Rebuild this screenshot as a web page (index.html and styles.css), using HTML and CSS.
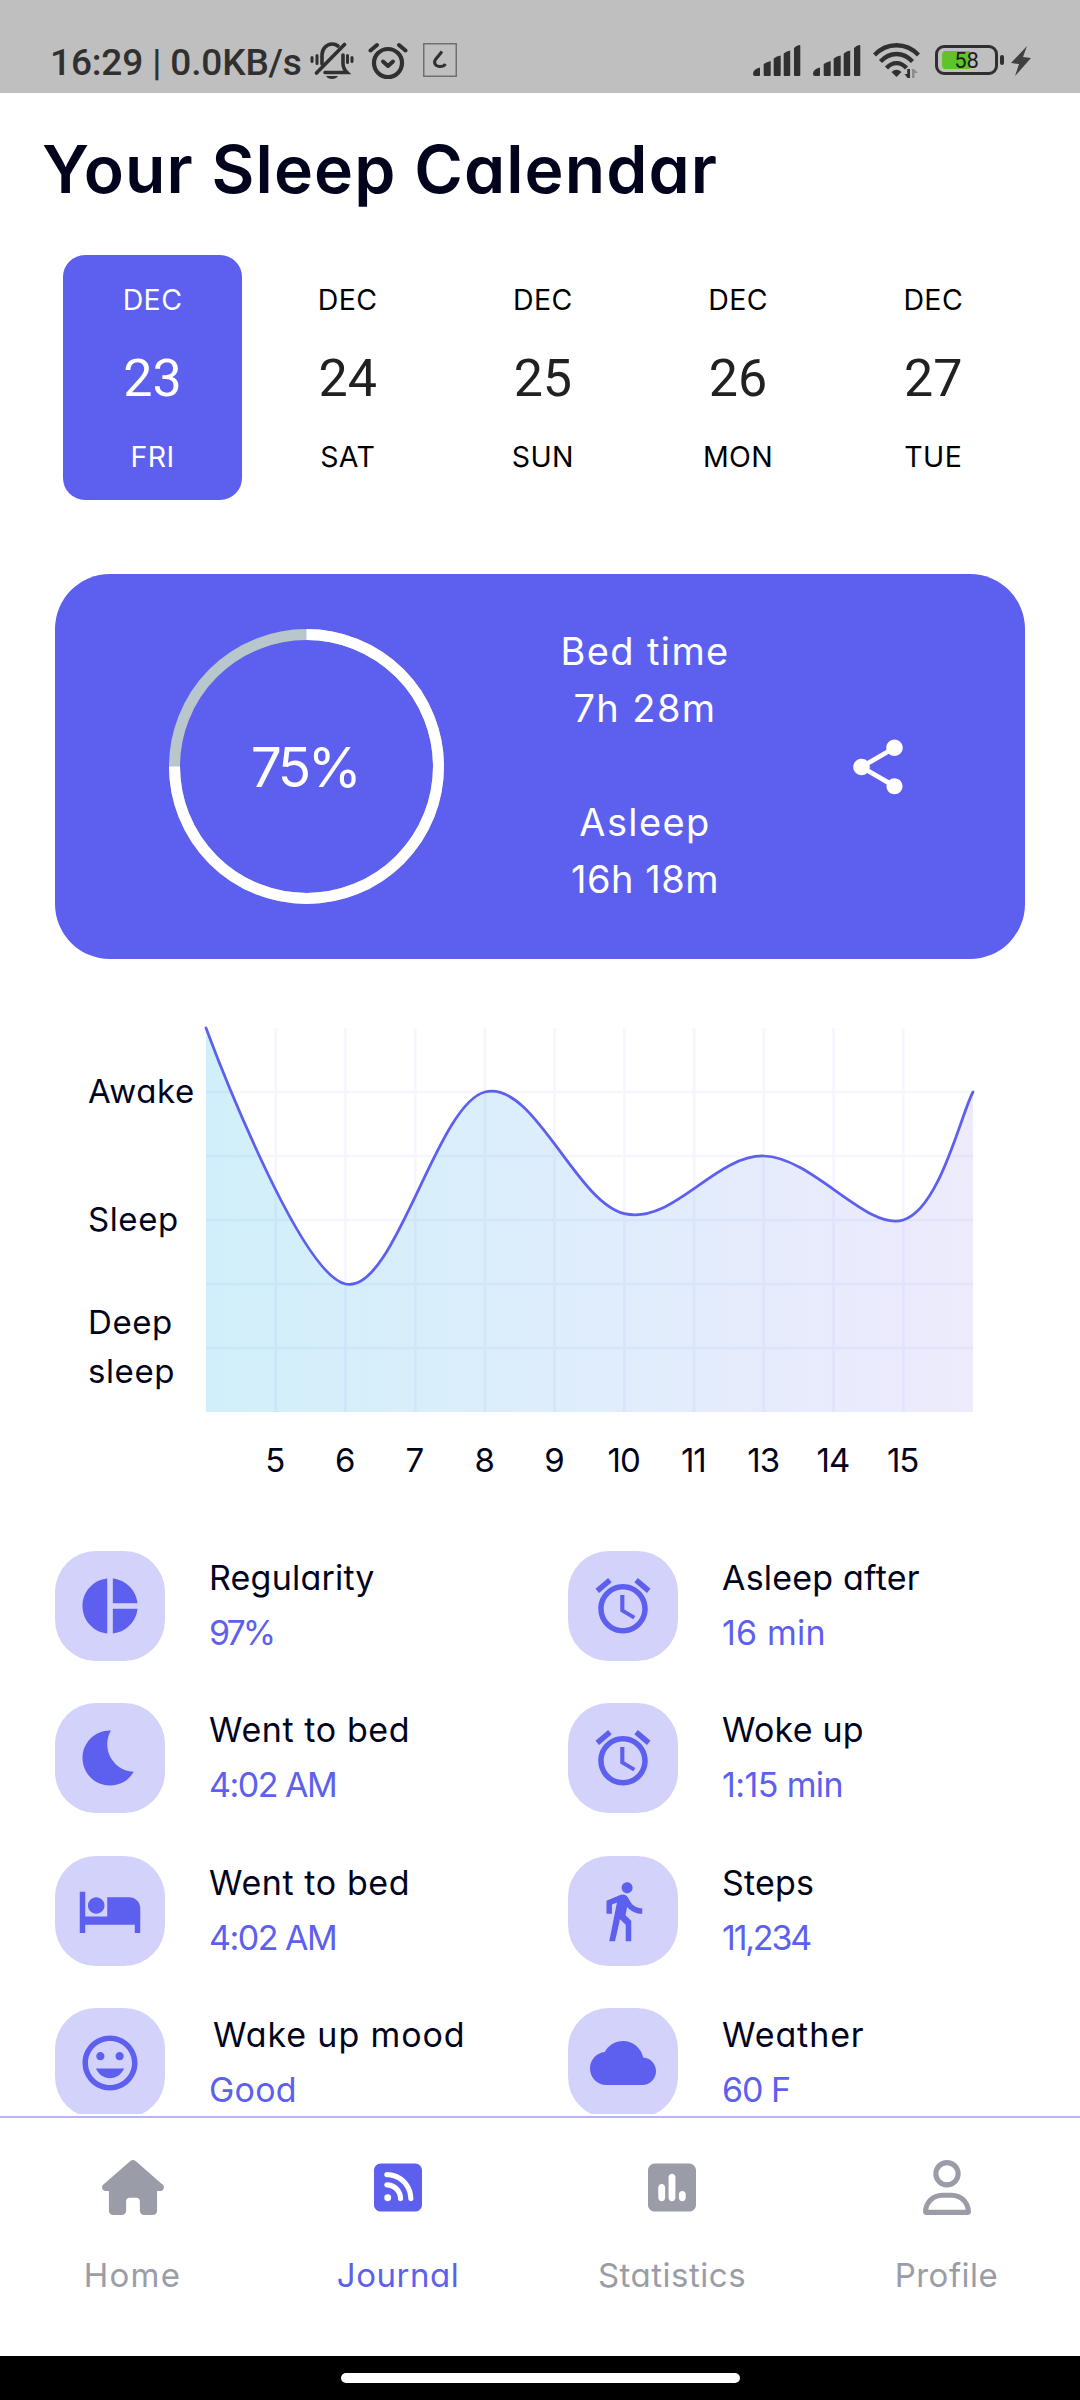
FILE: index.html
```html
<!DOCTYPE html>
<html lang="en">
<head>
<meta charset="utf-8">
<title>Your Sleep Calendar</title>
<link rel="stylesheet" href="styles.css">
</head>
<body>
<div class="screen">
  <header class="status">
    <div class="status-left">
      <span class="clock">16:29 | 0.0KB/s</span>
      <svg class="i-bell" width="44" height="38" viewBox="0 0 44 38" fill="none" stroke="#303030" stroke-width="3.6" stroke-linecap="round">
        <path d="M6.5 31 34.5 2.5"/>
        <path d="M12 22V13c0-6 4.500-11 10-11 2.500 0 4.500.8 6 2" />
        <path d="M15 30.500H37c-3-3-4-5-4-9V13"/>
        <path d="M2 15.500v4M7 13.500v8M42 15.500v4M37.500 13.500v7" stroke-width="3"/>
        <path d="M16 34h12c-2 4-10 4-12 0z" fill="#303030" stroke="none"/>
      </svg>
      <svg class="i-alarm" width="40" height="38" viewBox="0 0 40 38" fill="none" stroke="#303030" stroke-width="4.200" stroke-linecap="round" stroke-linejoin="round">
        <circle cx="20" cy="21" r="14"/>
        <path d="M2.500 8.500 9 3M37.500 8.500 31 3" stroke-width="4"/>
        <path d="M15 19.500l5 4.500 5-4.500" stroke-width="4"/>
      </svg>
      <svg class="i-box" width="34" height="34" viewBox="0 0 34 34" fill="none" stroke="#303030">
        <rect x=".75" y=".75" width="32.500" height="32.500" stroke="#707070" stroke-width="1.500"/>
        <path d="M19 8.500l-6.500 8c-2 3-.5 7 4.500 7 2.500 0 4.500-1 5.500-2.500" stroke-width="3"/>
      </svg>
    </div>
    <div class="status-right">
      <svg class="i-signal" width="48" height="31" viewBox="0 0 48 31" fill="#303030"><path d="M0 29q0-5 7-6.500v7.500q0 1-1 1H2q-2 0-2-2zM10.700 19q3-2 7-3v14q0 1-1 1h-5q-1 0-1-1zM20.700 13.500q3-2.500 7-3V30q0 1-1 1h-5q-1 0-1-1zM30.700 8.500q3-2.500 6.500-3V30q0 1-1 1h-4.500q-1 0-1-1zM41 3q2.500-2.500 5.300-3 1 0 1 1v29q0 1-1 1H42q-1 0-1-1z"/></svg>
      <svg class="i-signal" width="48" height="31" viewBox="0 0 48 31" fill="#303030"><path d="M0 29q0-5 7-6.500v7.500q0 1-1 1H2q-2 0-2-2zM10.700 19q3-2 7-3v14q0 1-1 1h-5q-1 0-1-1zM20.700 13.500q3-2.500 7-3V30q0 1-1 1h-5q-1 0-1-1zM30.700 8.500q3-2.500 6.500-3V30q0 1-1 1h-4.500q-1 0-1-1zM41 3q2.500-2.500 5.300-3 1 0 1 1v29q0 1-1 1H42q-1 0-1-1z"/></svg>
      <svg class="i-wifi" width="47" height="36" viewBox="0 0 47 36" fill="none" stroke="#303030" stroke-width="4.300">
        <path d="M1.500 12C14-1 33-1 45.500 12M7.500 18.500C17 8.500 30 8.500 39.500 18.500M13.500 25c6-6.500 14-6.500 20 0"/>
        <path d="M23.500 34l-5-5q5-4.500 10 0z" fill="#303030" stroke="none"/>
        <path d="M37 26v9h-2.500L31.500 31h2.700v-5z" fill="#303030" stroke="none"/>
        <path d="M39 35v-9h2l4 4h-3.500v5z" fill="#8c8c8c" stroke="none"/>
      </svg>
      <div class="battery"><span class="battery-fill"></span><span class="battery-text">58</span></div>
      <span class="battery-nub"></span>
      <svg class="i-bolt" width="20" height="30" viewBox="0 0 20 30" fill="#404040"><path d="M16 0 0 17l8 1L4 30 20 12l-8-1z"/></svg>
    </div>
  </header>

  <main class="content">
    <h1 class="title">Your Sleep Calendar</h1>

    <div class="calendar">
      <div class="day selected"><span class="month">DEC</span><span class="num">23</span><span class="dow">FRI</span></div>
      <div class="day"><span class="month">DEC</span><span class="num">24</span><span class="dow">SAT</span></div>
      <div class="day"><span class="month">DEC</span><span class="num">25</span><span class="dow">SUN</span></div>
      <div class="day"><span class="month">DEC</span><span class="num">26</span><span class="dow">MON</span></div>
      <div class="day"><span class="month">DEC</span><span class="num">27</span><span class="dow">TUE</span></div>
    </div>

    <section class="summary">
      <div class="ring">
        <svg class="ring-art" width="275" height="275" viewBox="0 0 275 275" fill="none" stroke-width="11">
          <circle cx="137.500" cy="137.500" r="132" stroke="#b8c7cb"/>
          <path d="M137.500 5.500a132 132 0 1 1-132 132" stroke="#fff"/>
        </svg>
        <span class="ring-text">75%</span>
      </div>
      <div class="times">
        <p><span>Bed time</span><span>7h 28m</span></p>
        <p><span>Asleep</span><span class="snug">16h 18m</span></p>
      </div>
      <svg class="share" width="66" height="66" viewBox="0 0 24 24" fill="#fff"><path d="M18 16.080c-.76 0-1.440.3-1.960.77L8.910 12.700c.05-.23.09-.46.09-.7s-.04-.47-.09-.7l7.050-4.110c.54.5 1.250.81 2.040.81 1.660 0 3-1.340 3-3s-1.340-3-3-3-3 1.340-3 3c0 .24.04.47.09.7L8.040 9.810C7.500 9.310 6.790 9 6 9c-1.660 0-3 1.340-3 3s1.340 3 3 3c.79 0 1.500-.31 2.040-.81l7.120 4.160c-.05.21-.08.43-.08.65 0 1.610 1.310 2.920 2.920 2.920s2.920-1.310 2.920-2.920-1.310-2.920-2.920-2.920z"/></svg>
    </section>

    <section class="chart">
      <div class="y-axis"><span>Awake</span><span>Sleep</span><span>Deep<br>sleep</span></div>
      <div class="plot">
        <svg class="plot-art" width="767" height="384" viewBox="0 0 767.250 384" preserveAspectRatio="none">
          <defs><linearGradient id="fill"><stop offset="0" stop-color="#d1effa"/><stop offset=".1" stop-color="#d3effa"/><stop offset=".5" stop-color="#dfedfc"/><stop offset=".9" stop-color="#ebebfd"/><stop offset="1" stop-color="#edebfc"/></linearGradient></defs>
          <path fill="url(#fill)" d="M0 0C0 0 90.700 244.800 139.500 256S230.200 76.300 279 64 369.700 174.400 418.500 185.600 509.200 126.900 558 128 660.900 203.200 697.500 192 755 86.400 767.250 64V384H0z"/>
          <path stroke="#5d5fef" stroke-opacity=".06" stroke-width="2.750" d="M0 64H767M0 128H767M0 192H767M0 256H767M0 320H767M69.750 0V384M139.500 0V384M209.250 0V384M279 0V384M348.750 0V384M418.500 0V384M488.250 0V384M558 0V384M627.750 0V384M697.500 0V384"/>
          <path fill="none" stroke="#5d5fef" stroke-width="2.750" stroke-linecap="round" d="M0 0C0 0 90.700 244.800 139.500 256S230.200 76.300 279 64 369.700 174.400 418.500 185.600 509.200 126.900 558 128 660.900 203.200 697.500 192 755 86.400 767.250 64"/>
        </svg>
        <div class="x-axis"><span>5</span><span>6</span><span>7</span><span>8</span><span>9</span><span>10</span><span>11</span><span>13</span><span>14</span><span>15</span></div>
      </div>
    </section>

    <section class="metrics">
      <div class="metric"><div class="tile"><svg viewBox="0 0 24 24"><path d="M11 2v20c-5.070-.5-9-4.790-9-10s3.930-9.500 9-10zm2.030 0v8.990H22c-.47-4.740-4.240-8.520-8.970-8.990zm0 11.010V22c4.740-.47 8.500-4.250 8.970-8.990h-8.970z"/></svg></div><div class="info"><b>Regularity</b><i class="percent">97%</i></div></div>
      <div class="metric"><div class="tile"><svg viewBox="0 0 24 24"><path d="M22 5.720l-4.600-3.860-1.290 1.530 4.600 3.860L22 5.720zM7.880 3.390L6.600 1.860 2 5.710l1.290 1.530 4.590-3.850zM12.500 8H11v6l4.750 2.850.75-1.230-4-2.370V8zM12 4c-4.970 0-9 4.030-9 9s4.020 9 9 9c4.970 0 9-4.030 9-9s-4.030-9-9-9zm0 16c-3.870 0-7-3.130-7-7s3.130-7 7-7 7 3.130 7 7-3.130 7-7 7z"/></svg></div><div class="info"><b>Asleep after</b><i>16 min</i></div></div>
      <div class="metric"><div class="tile"><svg viewBox="0 0 24 24"><path d="M12.340 2.020C6.590 1.820 2 6.420 2 12c0 5.520 4.480 10 10 10 3.710 0 6.930-2.020 8.660-5.020-7.510-.25-12.090-8.430-8.320-14.960z"/></svg></div><div class="info"><b class="wide">Went to bed</b><i class="time">4:02 AM</i></div></div>
      <div class="metric"><div class="tile"><svg viewBox="0 0 24 24"><path d="M22 5.720l-4.600-3.860-1.290 1.530 4.600 3.860L22 5.720zM7.880 3.390L6.600 1.860 2 5.710l1.290 1.530 4.590-3.850zM12.500 8H11v6l4.750 2.850.75-1.230-4-2.370V8zM12 4c-4.970 0-9 4.030-9 9s4.020 9 9 9c4.970 0 9-4.030 9-9s-4.030-9-9-9zm0 16c-3.870 0-7-3.130-7-7s3.130-7 7-7 7 3.130 7 7-3.130 7-7 7z"/></svg></div><div class="info"><b>Woke up</b><i class="duration">1:15 min</i></div></div>
      <div class="metric"><div class="tile"><svg viewBox="0 0 24 24"><path d="M7 13c1.660 0 3-1.340 3-3S8.660 7 7 7s-3 1.340-3 3 1.340 3 3 3zm12-6h-8v7H3V5H1v15h2v-3h18v3h2v-9c0-2.210-1.790-4-4-4z"/></svg></div><div class="info"><b class="wide">Went to bed</b><i class="time">4:02 AM</i></div></div>
      <div class="metric"><div class="tile"><svg viewBox="0 0 24 24"><path d="M13.500 5.500c1.100 0 2-.9 2-2s-.9-2-2-2-2 .9-2 2 .9 2 2 2zM9.800 8.900L7 23h2.100l1.800-8 2.100 2v6h2v-7.500l-2.100-2 .6-3C14.800 12 16.800 13 19 13v-2c-1.900 0-3.500-1-4.300-2.400l-1-1.600c-.4-.6-1-1-1.700-1-.3 0-.5.1-.8.1L6 8.300V13h2V9.600l1.800-.7"/></svg></div><div class="info"><b>Steps</b><i class="count">11,234</i></div></div>
      <div class="metric"><div class="tile"><svg viewBox="0 0 24 24"><path d="M11.990 2C6.470 2 2 6.480 2 12s4.470 10 9.990 10C17.520 22 22 17.520 22 12S17.520 2 11.990 2zM12 20c-4.420 0-8-3.580-8-8s3.580-8 8-8 8 3.580 8 8-3.580 8-8 8zm3.500-9c.83 0 1.500-.67 1.500-1.500S16.330 8 15.500 8 14 8.670 14 9.500s.67 1.500 1.500 1.500zm-7 0c.83 0 1.500-.67 1.500-1.500S9.330 8 8.500 8 7 8.670 7 9.500 7.670 11 8.500 11zm3.500 6.500c2.330 0 4.310-1.460 5.110-3.500H6.890c.8 2.040 2.780 3.500 5.110 3.500z"/></svg></div><div class="info"><b class="wider indent">Wake up mood</b><i>Good</i></div></div>
      <div class="metric"><div class="tile"><svg viewBox="0 0 24 24"><path d="M19.350 10.040C18.670 6.590 15.640 4 12 4 9.110 4 6.600 5.640 5.350 8.040 2.340 8.360 0 10.910 0 14c0 3.310 2.690 6 6 6h13c2.760 0 5-2.240 5-5 0-2.640-2.050-4.780-4.650-4.960z"/></svg></div><div class="info"><b class="wider">Weather</b><i class="temp">60 F</i></div></div>
    </section>
  </main>

  <nav class="nav">
    <div class="nav-item"><svg width="62" height="55" viewBox="0 0 576 512"><path d="M575.800 255.500c0 18-15 32.100-32 32.100h-32l.7 160.200c0 2.700-.2 5.400-.5 8.100V472c0 22.100-17.900 40-40 40H392c-22.100 0-40-17.900-40-40V384c0-17.700-14.300-32-32-32H256c-17.700 0-32 14.300-32 32v88c0 22.100-17.900 40-40 40H104c-22.100 0-40-17.900-40-40V287.600H32c-18 0-32-14-32-32.100 0-9 3-17 10-24L266.400 8c7-7 15-8 22-8s15 2 21 7L564.800 231.500c8 7 12 15 11 24z"/></svg><span class="home">Home</span></div>
    <div class="nav-item active"><svg width="48" height="55" viewBox="0 0 448 512"><path fill-rule="evenodd" d="M64 32C28.700 32 0 60.700 0 96V416c0 35.300 28.700 64 64 64H384c35.300 0 64-28.700 64-64V96c0-35.300-28.700-64-64-64H64zM96 136c0-13.300 10.700-24 24-24 137 0 248 111 248 248 0 13.300-10.700 24-24 24s-24-10.700-24-24c0-110.500-89.500-200-200-200-13.300 0-24-10.700-24-24zm0 96c0-13.300 10.700-24 24-24 83.900 0 152 68.100 152 152 0 13.300-10.700 24-24 24s-24-10.700-24-24c0-57.400-46.600-104-104-104-13.300 0-24-10.700-24-24zm0 120a32 32 0 1 1 64 0 32 32 0 1 1-64 0z"/></svg><span>Journal</span></div>
    <div class="nav-item"><svg width="48" height="55" viewBox="0 0 448 512"><path fill-rule="evenodd" d="M64 32C28.700 32 0 60.700 0 96V416c0 35.300 28.700 64 64 64H384c35.300 0 64-28.700 64-64V96c0-35.300-28.700-64-64-64H64zM128 224c17.700 0 32 14.300 32 32V352c0 17.700-14.300 32-32 32s-32-14.300-32-32V256c0-17.700 14.300-32 32-32zM192 160c0-17.700 14.300-32 32-32s32 14.300 32 32V352c0 17.700-14.300 32-32 32s-32-14.300-32-32V160zM320 288c17.700 0 32 14.300 32 32v32c0 17.700-14.300 32-32 32s-32-14.300-32-32V320c0-17.700 14.300-32 32-32z"/></svg><span>Statistics</span></div>
    <div class="nav-item"><svg width="48" height="55" viewBox="0 0 448 512"><path fill-rule="evenodd" d="M304 128a80 80 0 1 0-160 0 80 80 0 1 0 160 0zM96 128a128 128 0 1 1 256 0A128 128 0 1 1 96 128zM49.300 464H398.700c-8.900-63.300-63.300-112-129-112H178.300c-65.700 0-120.100 48.700-129 112zM0 482.300C0 383.800 79.800 304 178.300 304h91.400C368.200 304 448 383.800 448 482.300c0 16.400-13.300 29.700-29.700 29.700H29.700C13.300 512 0 498.700 0 482.300z"/></svg><span>Profile</span></div>
  </nav>
  <footer class="gesture"><span></span></footer>
</div>
</body>
</html>
```
FILE: styles.css
```css
* { box-sizing: border-box; margin: 0; padding: 0; }
body { background: #fff; font-family: Inter, "Liberation Sans", sans-serif; font-feature-settings: "cv11"; font-weight: 400; color: #02041d; }
svg { display: block; flex: none; }
.screen { width: 1080px; height: 2400px; display: flex; flex-direction: column; overflow: hidden; }

.status { height: 93px; flex: none; background: #bfbfbf; display: flex; justify-content: space-between; padding: 42px 49px 0 50px; }
.status-left, .status-right { display: flex; align-items: flex-start; }
.clock { font: 500 37px/41px Roboto, sans-serif; letter-spacing: -.15px; color: #303030; white-space: nowrap; width: 260px; }
.i-alarm { margin-left: 14px; }
.i-box { margin: 1px 0 0 15px; }
.i-signal { margin: 3px 12px 0 0; }
.i-wifi { margin: 1px 15px 0 0; }
.battery { position: relative; width: 63px; height: 30px; margin-top: 3px; border: 3px solid #303030; border-radius: 9px; }
.battery-fill { position: absolute; left: 4px; top: 3px; width: 28px; height: 18px; background: #5fc428; border-radius: 4px 0 0 4px; }
.battery-text { position: absolute; left: 0; top: 0; width: 57px; text-align: center; font: 400 22px/25px Roboto, sans-serif; color: #1e1e1e; }
.battery-nub { width: 4px; height: 10px; margin: 13px 7px 0 2px; background: #303030; border-radius: 2px; }
.i-bolt { margin-top: 4px; }

.content { height: 2021px; flex: none; overflow: hidden; padding: 40px 55px 0; }
.title { font-size: 66px; font-weight: 600; line-height: 72px; letter-spacing: 1.1px; white-space: nowrap; margin-left: -13px; }
.calendar { display: flex; gap: 16.200px; margin: 50px 0 0 8px; }
.day { width: 179px; height: 245px; border-radius: 22px; flex: none; display: flex; flex-direction: column; align-items: center; color: #000; padding-top: 25px; }
.month, .dow { font-size: 28.500px; line-height: 40px; letter-spacing: .4px; }
.num { font: 400 52px/60px Roboto, sans-serif; color: #212121; margin: 29px 0 28px; }
.selected { background: #5d5fef; color: #fff; }
.selected .num { color: #fff; }

.summary { margin-top: 74px; height: 385px; border-radius: 55px; background: #5d5fef; color: #fff; display: flex; align-items: center; padding-left: 114px; }
.ring { width: 275px; height: 275px; display: grid; place-items: center; }
.ring > * { grid-area: 1 / 1; }
.ring-text { font-size: 55px; letter-spacing: -3.500px; margin-right: 4px; }
.times { width: 240px; margin: -2px 0 0 81px; text-align: center; font-size: 38px; line-height: 57px; letter-spacing: 1.400px; display: flex; flex-direction: column; gap: 57px; }
.times span { display: block; }
.times .snug { letter-spacing: .5px; }
.share { margin-left: 80px; }

.chart { display: flex; margin-top: 69px; height: 460px; font-size: 33px; letter-spacing: .6px; }
.y-axis { width: 151px; padding: 39px 0 0 33px; line-height: 49px; display: flex; flex-direction: column; flex: none; }
.y-axis span:nth-child(2) { margin-top: 79px; }
.y-axis span:nth-child(3) { margin-top: 54px; }
.plot { width: 767px; }
.plot-art { overflow: visible; }
.x-axis { display: flex; margin: 24px 0 0 34px; line-height: 49px; letter-spacing: -1px; }
.x-axis span { width: 69.750px; text-align: center; }

.metrics { margin-top: 63px; display: grid; grid-template-columns: 513px 1fr; row-gap: 42.300px; }
.metric { display: flex; height: 110px; }
.tile { width: 110px; height: 110px; border-radius: 41px; background: #d3d2fa; display: grid; place-items: center; flex: none; }
.tile svg { width: 66px; height: 66px; fill: #5d5fef; }
.info { margin: -1px 0 0 44px; font-size: 34px; line-height: 55px; letter-spacing: .2px; white-space: nowrap; }
.info b, .info i { display: block; font-weight: 400; font-style: normal; }
.info i { color: #5d5fef; }
.wide { letter-spacing: .6px; }
.wider { letter-spacing: .9px; }
.info .percent { letter-spacing: -3px; }
.info .time { letter-spacing: -1.500px; }
.info .duration { letter-spacing: -.6px; }
.info .count { letter-spacing: -2.200px; }
.info .temp { letter-spacing: -1px; }
.indent { padding-left: 4px; }

.nav { height: 240px; flex: none; margin-top: 2px; border-top: 2px solid #b5b5f8; display: grid; grid-template-columns: 265px 266px 282px 267px; color: #9a9ca8; }
.nav-item { display: flex; flex-direction: column; align-items: center; padding-top: 42px; font-size: 33px; line-height: 50px; letter-spacing: .5px; gap: 35px; }
.nav-item svg { fill: currentColor; }
.home { letter-spacing: 1.300px; }
.active { color: #5d5fef; }
.gesture { height: 44px; background: #000; display: flex; justify-content: center; padding-top: 17px; }
.gesture span { width: 399px; height: 10px; border-radius: 5px; background: #fff; }
```
